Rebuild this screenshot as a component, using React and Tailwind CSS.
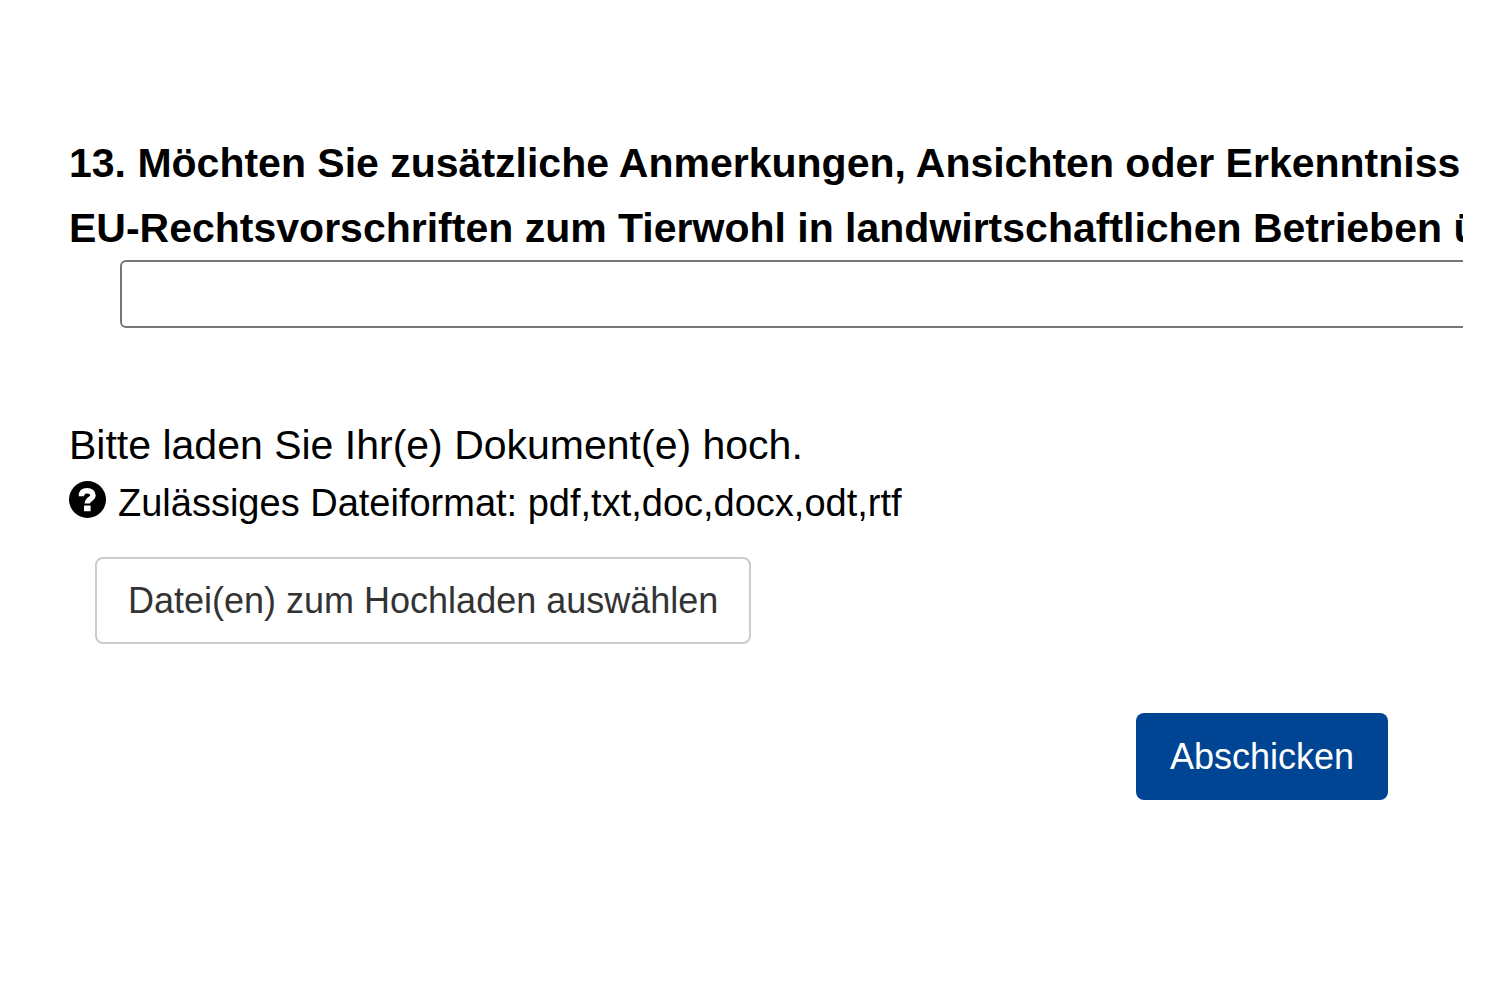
import React from 'react';

const QuestionSign = ({ className }) => (
  <svg viewBox="0 0 37 37" className={className} aria-hidden="true">
    <circle cx="18.5" cy="18.5" r="18.5" fill="currentColor" />
    <path
      d="M12.4 15.2C12.4 11.400 14.600 9.800 18.200 9.800C22 9.800 24 11.600 24 14.200C24 18.200 18.300 17.800 18.300 22.600"
      fill="none"
      stroke="white"
      strokeWidth="5.4"
    />
    <rect x="15" y="24.500" width="6.600" height="5.800" rx="0.600" fill="white" />
  </svg>
);

const App = () => {
  return (
    <main className="min-h-screen bg-white pt-[131px] pr-[37px] pl-[69px] font-['Liberation_Sans',Arial,sans-serif] text-black">
      <form className="flex flex-col" onSubmit={(e) => e.preventDefault()}>
        {/* Free text question */}
        <div className="overflow-hidden">
          <label htmlFor="remarks" className="block text-[41px] leading-[65px] font-bold whitespace-nowrap">
            13. Möchten Sie zusätzliche Anmerkungen, Ansichten oder Erkenntniss
            <br />
            EU-Rechtsvorschriften zum Tierwohl in landwirtschaftlichen Betrieben ü
          </label>
          <input
            id="remarks"
            type="text"
            className="-mt-px ml-[51px] block h-[68px] w-full rounded-md border-2 border-[#767676] bg-white px-4 text-[36px]"
          />
        </div>

        {/* Document upload */}
        <div className="mt-[88px]">
          <p className="text-[41px] leading-[58px]">Bitte laden Sie Ihr(e) Dokument(e) hoch.</p>
          <p className="flex items-start gap-3 text-[38px] leading-[58px]">
            <QuestionSign className="mt-[7px] size-[37px]" />
            Zulässiges Dateiformat: pdf,txt,doc,docx,odt,rtf
          </p>
          <button
            type="button"
            className="mt-[25px] ml-[26px] h-[87px] rounded-lg border-2 border-[#cccccc] bg-white px-[31px] text-[36px] text-[#333333]"
          >
            Datei(en) zum Hochladen auswählen
          </button>
        </div>

        <button
          type="submit"
          className="mt-[69px] mr-[75px] h-[87px] self-end rounded-lg bg-[#004494] px-[34px] text-[36px] text-white"
        >
          Abschicken
        </button>
      </form>
    </main>
  );
};

export default App;
